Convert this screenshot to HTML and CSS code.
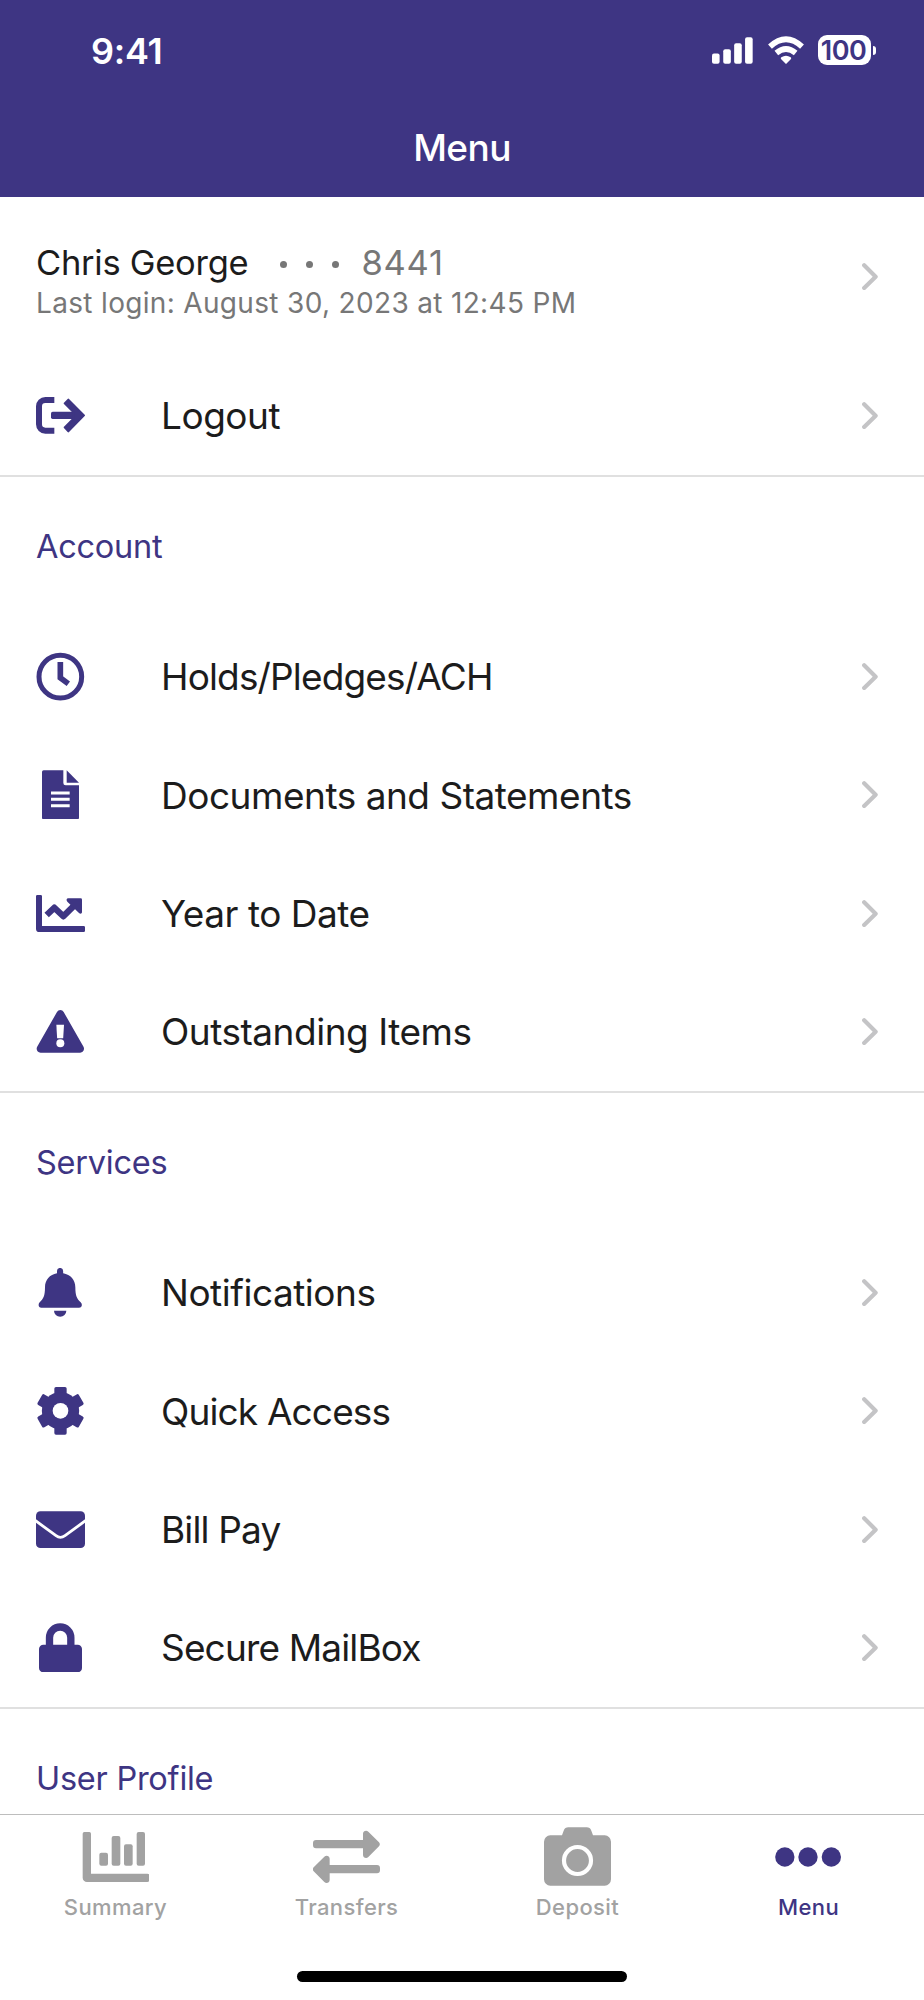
FILE: index.html
```html
<!DOCTYPE html>
<html lang="en">
<head>
    <meta charset="UTF-8">
    <meta name="viewport" content="width=device-width, initial-scale=1.0">
    <title>Menu</title>
    <link rel="stylesheet" href="styles.css">
</head>
<body>
    <!-- SHARED CHEVRON -->
    <svg width="0" height="0" class="defs" aria-hidden="true">
        <symbol id="chevron" viewBox="114 68 48 82">
            <path d="M120.500 75L155 109L120.500 143" fill="none" stroke="currentColor" stroke-width="12.500" stroke-linecap="round" stroke-linejoin="round"/>
        </symbol>
    </svg>

    <div class="screen">
        <header class="header">
            <div class="status">
                <span class="status__time">9:41</span>
                <div class="status__icons">
                    <svg class="status__signal" viewBox="65 51 124 80" width="41" height="27">
                        <rect x="65" y="100" width="23" height="31" rx="6"/>
                        <rect x="99" y="87" width="23" height="44" rx="6"/>
                        <rect x="132" y="69" width="23" height="62" rx="6"/>
                        <rect x="165" y="51" width="23" height="80" rx="6"/>
                    </svg>
                    <svg class="status__wifi" viewBox="232 47 108 84" width="36" height="28">
                        <path d="M286 131L271 116Q269 113 272 111Q286 101 300 111Q303 113 301 116Z"/>
                        <path d="M257 98Q286 74 315 98" fill="none" stroke="#fff" stroke-width="17"/>
                        <path d="M238 79Q286 35 334 79" fill="none" stroke="#fff" stroke-width="17"/>
                    </svg>
                    <div class="battery"><span class="battery__level">100</span></div>
                </div>
            </div>
            <h1 class="header__title">Menu</h1>
        </header>

        <main class="main">
            <a href="#" class="user">
                <div class="user__info">
                    <div class="user__line">
                        <span class="user__name">Chris George</span>
                        <span class="user__dots"><i></i><i></i><i></i></span>
                        <span class="user__number">8441</span>
                    </div>
                    <div class="user__login">Last login: August 30, 2023 at 12:45 PM</div>
                </div>
                <svg class="chevron"><use href="#chevron"/></svg>
            </a>
            <a href="#" class="row">
                <svg class="row__icon" viewBox="48 34 147 147">
                    <path d="M103 61H76a19 19 0 0 0-19 19v54a19 19 0 0 0 19 19h27" fill="none" stroke="currentColor" stroke-width="18"/>
                    <rect x="93" y="96" width="84" height="22" rx="5"/>
                    <path d="M145 60L192 107L145 155L134 143L160 117V97L134 71Z" stroke="currentColor" stroke-width="6" stroke-linejoin="round"/>
                </svg>
                <span class="row__label">Logout</span>
                <svg class="chevron"><use href="#chevron"/></svg>
            </a>

            <!-- ACCOUNT -->
            <section class="section">
                <h2 class="section__title">Account</h2>
                <a href="#" class="row">
                    <svg class="row__icon" viewBox="48 37 147 147">
                        <circle cx="121" cy="111" r="64" fill="none" stroke="currentColor" stroke-width="15"/>
                        <path d="M121 67V114.500L145 132" fill="none" stroke="currentColor" stroke-width="17"/>
                    </svg>
                    <span class="row__label row__label--tight">Holds/Pledges/ACH</span>
                    <svg class="chevron"><use href="#chevron"/></svg>
                </a>
                <a href="#" class="row">
                    <svg class="row__icon" viewBox="48 392 147 147">
                        <path d="M71 393H130V431a7 7 0 0 0 7 7H177V535a5 5 0 0 1-5 5H71a5 5 0 0 1-5-5V398a5 5 0 0 1 5-5Z"/>
                        <path d="M140 393L177 430H140Z"/>
                        <path d="M93 461H149M93 480H149M93 499H149" stroke="#fff" stroke-width="9"/>
                    </svg>
                    <span class="row__label">Documents and Statements</span>
                    <svg class="chevron"><use href="#chevron"/></svg>
                </a>
                <a href="#" class="row">
                    <svg class="row__icon" viewBox="48 27 147 147">
                        <path d="M48 49a4 4 0 0 1 4-4H62a4 4 0 0 1 4 4V138H191a4 4 0 0 1 4 4V152a4 4 0 0 1-4 4H58a10 10 0 0 1-10-10Z"/>
                        <path d="M80 105L103 83L130 109L168 71" fill="none" stroke="currentColor" stroke-width="19" stroke-linejoin="round"/>
                        <path d="M145 55H182a4 4 0 0 1 4 4V96C186 101 181 103 177 99L142 65C138 61 139 55 145 55Z"/>
                    </svg>
                    <span class="row__label">Year to Date</span>
                    <svg class="chevron"><use href="#chevron"/></svg>
                </a>
                <a href="#" class="row">
                    <svg class="row__icon" viewBox="48 382 147 147">
                        <path d="M111 397a11.500 11.500 0 0 1 20 0L190.500 501C195 510 189 519 180.500 519H61.500C53 519 47 510 51.500 501Z"/>
                        <path d="M109 435H132L129.500 476H111.500Z" fill="#fff"/>
                        <circle cx="121" cy="491" r="12" fill="#fff"/>
                    </svg>
                    <span class="row__label">Outstanding Items</span>
                    <svg class="chevron"><use href="#chevron"/></svg>
                </a>
            </section>

            <!-- SERVICES -->
            <section class="section">
                <h2 class="section__title">Services</h2>
                <a href="#" class="row">
                    <svg class="row__icon" viewBox="48 55 147 147">
                        <path d="M111 71V64a9.200 9.200 0 0 1 18.400 0V71C152 75 166 91 166 113C166 139 171 148 182 158C189 165 185 174 177 174H64C56 174 53 165 59 158C70 148 75 139 75 113C75 91 89 75 111 71Z"/>
                        <path d="M102 183H139a18.500 18.500 0 0 1-37 0Z"/>
                    </svg>
                    <span class="row__label">Notifications</span>
                    <svg class="chevron"><use href="#chevron"/></svg>
                </a>
                <a href="#" class="row">
                    <svg class="row__icon" viewBox="48 409 147 147">
                        <rect x="103" y="412" width="37" height="143" rx="5"/>
                        <rect x="103" y="412" width="37" height="143" rx="5" transform="rotate(60 121.500 483.500)"/>
                        <rect x="103" y="412" width="37" height="143" rx="5" transform="rotate(120 121.500 483.500)"/>
                        <circle cx="121.500" cy="483.500" r="56"/>
                        <circle cx="121.500" cy="483.500" r="23.500" fill="#fff"/>
                    </svg>
                    <span class="row__label row__label--tight">Quick Access</span>
                    <svg class="chevron"><use href="#chevron"/></svg>
                </a>
                <a href="#" class="row">
                    <svg class="row__icon" viewBox="48 45 147 147">
                        <rect x="48" y="64" width="147" height="110" rx="13"/>
                        <path d="M45 91L108 137Q121 147 135 137L198 91" fill="none" stroke="#fff" stroke-width="8.500"/>
                    </svg>
                    <span class="row__label row__label--tight">Bill Pay</span>
                    <svg class="chevron"><use href="#chevron"/></svg>
                </a>
                <a href="#" class="row">
                    <svg class="row__icon" viewBox="48 400 147 147">
                        <rect x="57" y="465" width="129" height="83" rx="13"/>
                        <path d="M88.500 470V444a32 32 0 0 1 64 0V470" fill="none" stroke="currentColor" stroke-width="22"/>
                    </svg>
                    <span class="row__label row__label--tight">Secure MailBox</span>
                    <svg class="chevron"><use href="#chevron"/></svg>
                </a>
            </section>

            <section class="section">
                <h2 class="section__title">User Profile</h2>
            </section>
        </main>

        <!-- TAB BAR -->
        <footer class="footer">
            <nav class="tabs">
                <a href="#" class="tab">
                    <svg class="tab__icon" viewBox="246 261 201 180">
                        <path d="M248 281a5 5 0 0 1 5-5H268a5 5 0 0 1 5 5V401H442a6 6 0 0 1 6 6V420a6 6 0 0 1-6 6H261a13 13 0 0 1-13-13Z"/>
                        <rect x="298" y="338" width="26" height="39" rx="6"/>
                        <rect x="335" y="288" width="26" height="89" rx="6"/>
                        <rect x="372" y="313" width="26" height="64" rx="6"/>
                        <rect x="410" y="276" width="25" height="101" rx="6"/>
                    </svg>
                    <span class="tab__label">Summary</span>
                </a>
                <a href="#" class="tab">
                    <svg class="tab__icon" viewBox="938 261 201 180">
                        <path d="M947 300H1088V281C1088 273 1098 269 1104 275L1136 307Q1141 313 1136 319L1104 351C1098 357 1088 353 1088 345V325H947a9 9 0 0 1-9-9V309a9 9 0 0 1 9-9Z"/>
                        <path d="M1130 375H988V356C988 348 978 344 972 350L940 382Q935 388 940 394L972 426C978 432 988 428 988 420V400H1130a9 9 0 0 0 9-9V384a9 9 0 0 0-9-9Z"/>
                    </svg>
                    <span class="tab__label">Transfers</span>
                </a>
                <a href="#" class="tab">
                    <svg class="tab__icon" viewBox="246 261 201 180">
                        <path d="M265 286H300L305 272Q309 262 319 262H374Q384 262 388 272L393 286H428a19 19 0 0 1 19 19V418a19 19 0 0 1-19 19H265a19 19 0 0 1-19-19V305a19 19 0 0 1 19-19Z"/>
                        <circle cx="346.500" cy="361.500" r="40.500" fill="none" stroke="#fff" stroke-width="12.500"/>
                    </svg>
                    <span class="tab__label">Deposit</span>
                </a>
                <a href="#" class="tab tab--active">
                    <svg class="tab__icon" viewBox="938 261 201 180">
                        <circle cx="967.500" cy="351" r="29"/>
                        <circle cx="1037" cy="351" r="29"/>
                        <circle cx="1107" cy="351" r="29"/>
                    </svg>
                    <span class="tab__label">Menu</span>
                </a>
            </nav>
            <div class="home-bar"></div>
        </footer>
    </div>
</body>
</html>
```
FILE: styles.css
```css
:root {
    --primary: #3e3583;
    --text: #1c1c1c;
    --muted: #777;
    --inactive: #a2a2a2;
    --line: #e0e0e0;
}

* {
    box-sizing: border-box;
}

body {
    margin: 0;
    background-color: #fff;
    color: var(--text);
    font-family: "Inter", "Liberation Sans", sans-serif;
}

a {
    color: inherit;
    text-decoration: none;
}

svg {
    display: block;
    fill: currentColor;
    flex-shrink: 0;
}

.defs {
    position: absolute;
}

.screen {
    width: 924px;
    height: 2000px;
    display: flex;
    flex-direction: column;
    overflow: hidden;
}

.header {
    height: 196.5px;
    flex-shrink: 0;
    background-color: var(--primary);
    color: #fff;
}
.header__title {
    margin: 0;
    padding-top: 23px;
    font-size: 37px;
    line-height: 50px;
    font-weight: 500;
    letter-spacing: -0.6px;
    text-align: center;
}

.status {
    display: flex;
    justify-content: space-between;
    align-items: center;
    height: 100px;
    padding: 0 48px 0 91px;
}
.status__time {
    padding-top: 2px;
    font-size: 36px;
    font-weight: 600;
    letter-spacing: -0.3px;
}
.status__icons {
    display: flex;
    align-items: center;
}
.status__wifi {
    margin: 0 14px 0 15px;
}

.battery {
    display: flex;
    align-items: center;
    gap: 2px;
    height: 30px;
}
.battery__level {
    width: 53px;
    height: 30px;
    padding-right: 2px;
    border-radius: 9px;
    background-color: #fff;
    color: var(--primary);
    font-size: 27px;
    font-weight: 600;
    line-height: 31px;
    letter-spacing: -0.5px;
    text-align: center;
}
.battery::after {
    content: "";
    width: 3px;
    height: 9px;
    border-radius: 0 4px 4px 0;
    background-color: #fff;
}

.main {
    flex: 1;
    min-height: 0;
    overflow: hidden;
}

.user {
    display: flex;
    align-items: center;
    justify-content: space-between;
    height: 160px;
    padding: 0 46px 0 36px;
}
.user__info {
    padding-top: 11px;
    white-space: nowrap;
}
.user__line {
    display: flex;
    align-items: center;
    font-size: 34.5px;
    line-height: 42px;
}
.user__name {
    letter-spacing: -0.27px;
}
.user__dots {
    display: flex;
    gap: 19px;
    margin: 3px 22px 0 32px;
}
.user__dots i {
    width: 7px;
    height: 7px;
    border-radius: 50%;
    background-color: var(--muted);
}
.user__number,
.user__login {
    color: var(--muted);
}
.user__number {
    letter-spacing: 0.8px;
}
.user__login {
    font-size: 28px;
    line-height: 38px;
    letter-spacing: 0.33px;
}

.chevron {
    width: 16px;
    height: 27.3px;
    margin-left: auto;
    color: #c4c4c6;
}

.row {
    display: flex;
    align-items: center;
    height: 118.33px;
    padding: 0 46px 0 36px;
}
.row__icon {
    width: 49px;
    height: 49px;
    margin-right: 76px;
    color: var(--primary);
}
.row__label {
    padding-top: 0.5px;
    font-size: 37px;
    letter-spacing: -0.48px;
    white-space: nowrap;
}
.row__label--tight {
    letter-spacing: -0.85px;
}

.section {
    border-top: 2px solid var(--line);
}
.section__title {
    margin: 0;
    height: 140.67px;
    padding: 45px 36px 0;
    color: var(--primary);
    font-size: 32.5px;
    font-weight: 400;
    line-height: 50px;
    letter-spacing: -0.25px;
}

.footer {
    display: flex;
    flex-direction: column;
    align-items: center;
    flex-shrink: 0;
    height: 186px;
    padding-bottom: 18px;
    border-top: 1px solid #bdbdbd;
    background-color: #fff;
}

.tabs {
    display: grid;
    grid-template-columns: repeat(4, 1fr);
    width: 100%;
}

.tab {
    display: flex;
    flex-direction: column;
    align-items: center;
    gap: 7px;
    padding-top: 12px;
    color: var(--inactive);
}
.tab--active {
    color: var(--primary);
}
.tab__icon {
    width: 67px;
    height: 60px;
}
.tab__label {
    font-size: 22px;
    font-weight: 500;
    line-height: 26px;
    letter-spacing: 0.4px;
}

.home-bar {
    width: 330px;
    height: 11px;
    margin-top: auto;
    border-radius: 6px;
    background-color: #000;
}
```
